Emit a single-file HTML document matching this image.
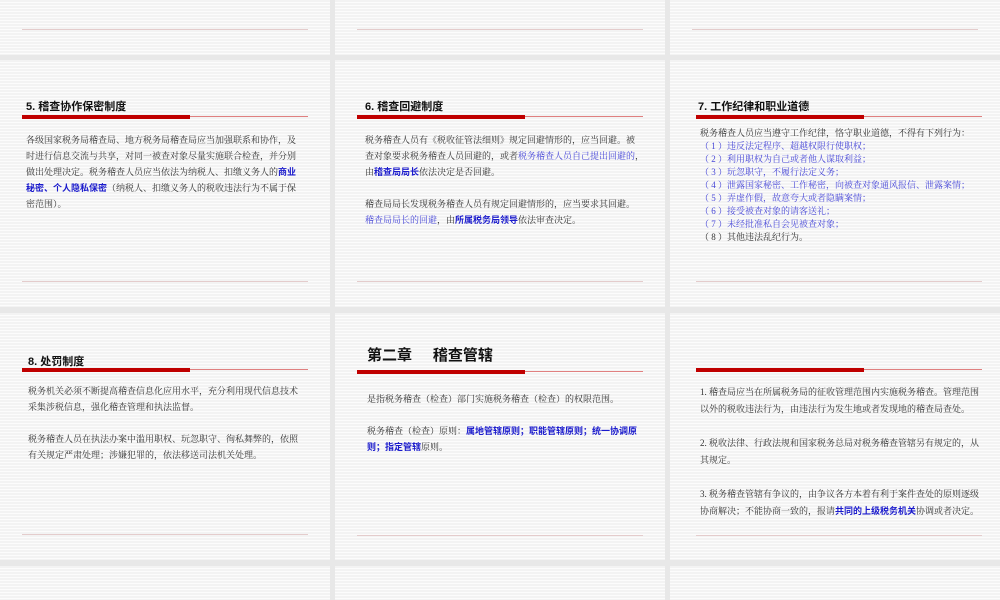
<!DOCTYPE html>
<html style="overflow:hidden;height:600px"><head><meta charset="utf-8"><style>
body{margin:0;width:1000px;height:600px;background:#e8e8e8;position:relative;overflow:hidden;font-family:"Liberation Serif","Noto Serif CJK SC",serif;}
.s{position:absolute;width:330px;height:247px;background:repeating-linear-gradient(#f3f3f3 0 2px,#fcfcfc 2px 3px);overflow:hidden}
.t{position:absolute;left:26px;top:38px;font-family:"Liberation Sans","Noto Sans CJK SC",sans-serif;font-weight:bold;font-size:11px;color:#111}
.bar{position:absolute;left:22px;top:55px;width:168px;height:4px;background:#c00000}
.thin{position:absolute;left:190px;top:56px;width:118px;height:1px;background:#e08080}
.bl{position:absolute;left:22px;top:221px;width:286px;height:1px;background:#e4cccc}
.x{position:absolute;left:26px;top:72px;font-size:9px;line-height:16px;color:#333;white-space:nowrap}
.b{color:#1a1acc;font-weight:bold;font-family:"Liberation Sans","Noto Sans CJK SC",sans-serif}
.l{color:#4848d8}
</style></head><body>
<div class="s" style="left:0;top:-192px"><div class="bl"></div></div>
<div class="s" style="left:335px;top:-192px"><div class="bl"></div></div>
<div class="s" style="left:670px;top:-192px"><div class="bl"></div></div>

<div class="s" style="left:0;top:60px">
<div class="t">5. 稽查协作保密制度</div><div class="bar"></div><div class="thin"></div>
<div class="x">各级国家税务局稽查局、地方税务局稽查局应当加强联系和协作，及<br>时进行信息交流与共享，对同一被查对象尽量实施联合检查，并分别<br>做出处理决定。税务稽查人员应当依法为纳税人、扣缴义务人的<span class="b">商业</span><br><span class="b">秘密、个人隐私保密</span>（纳税人、扣缴义务人的税收违法行为不属于保<br>密范围）。</div>
<div class="bl"></div></div>

<div class="s" style="left:335px;top:60px">
<div class="t" style="left:30px">6. 稽查回避制度</div><div class="bar"></div><div class="thin"></div>
<div class="x" style="left:30px">税务稽查人员有《税收征管法细则》规定回避情形的，应当回避。被<br>查对象要求税务稽查人员回避的，或者<span class="l">税务稽查人员自己提出回避的</span>，<br>由<span class="b">稽查局局长</span>依法决定是否回避。<br><br>稽查局局长发现税务稽查人员有规定回避情形的，应当要求其回避。<br><span class="l">稽查局局长的回避</span>，由<span class="b">所属税务局领导</span>依法审查决定。</div>
<div class="bl"></div></div>

<div class="s" style="left:670px;top:60px">
<div class="t" style="left:28px">7. 工作纪律和职业道德</div><div class="bar" style="left:26px"></div><div class="thin" style="left:194px"></div>
<div class="x" style="left:30px;top:67px;line-height:13px">税务稽查人员应当遵守工作纪律，恪守职业道德，不得有下列行为：<br><span class="l">（ 1 ）违反法定程序、超越权限行使职权；<br>（ 2 ）利用职权为自己或者他人谋取利益；<br>（ 3 ）玩忽职守，不履行法定义务；<br>（ 4 ）泄露国家秘密、工作秘密，向被查对象通风报信、泄露案情；<br>（ 5 ）弄虚作假，故意夸大或者隐瞒案情；<br>（ 6 ）接受被查对象的请客送礼；<br>（ 7 ）未经批准私自会见被查对象；</span><br>（ 8 ）其他违法乱纪行为。</div>
<div class="bl" style="left:26px"></div></div>

<div class="s" style="left:0;top:313px">
<div class="t" style="left:28px;top:40px">8. 处罚制度</div><div class="bar"></div><div class="thin"></div>
<div class="x" style="left:28px;top:70px">税务机关必须不断提高稽查信息化应用水平，充分利用现代信息技术<br>采集涉税信息，强化稽查管理和执法监督。<br><br>税务稽查人员在执法办案中滥用职权、玩忽职守、徇私舞弊的，依照<br>有关规定严肃处理；涉嫌犯罪的，依法移送司法机关处理。</div>
<div class="bl"></div></div>

<div class="s" style="left:335px;top:313px">
<div class="t" style="left:32px;top:31px;font-size:15px;font-family:'Liberation Sans','Noto Sans CJK SC',sans-serif">第二章&nbsp;&nbsp;&nbsp;&nbsp;&nbsp;稽查管辖</div><div class="bar" style="top:57px"></div><div class="thin" style="top:58px"></div>
<div class="x" style="left:32px;top:78px">是指税务稽查（检查）部门实施税务稽查（检查）的权限范围。<br><br>税务稽查（检查）原则：<span class="b">属地管辖原则；职能管辖原则；统一协调原</span><br><span class="b">则；指定管辖</span>原则。</div>
<div class="bl" style="top:222px"></div></div>

<div class="s" style="left:670px;top:313px">
<div class="bar" style="left:26px;top:55px"></div><div class="thin" style="left:194px"></div>
<div class="x" style="left:30px;top:71px;line-height:17px">1. 稽查局应当在所属税务局的征收管理范围内实施税务稽查。管理范围<br>以外的税收违法行为，由违法行为发生地或者发现地的稽查局查处。<br><br>2. 税收法律、行政法规和国家税务总局对税务稽查管辖另有规定的，从<br>其规定。<br><br>3. 税务稽查管辖有争议的，由争议各方本着有利于案件查处的原则逐级<br>协商解决；不能协商一致的，报请<span class="b">共同的上级税务机关</span>协调或者决定。</div>
<div class="bl" style="left:26px;top:222px"></div></div>

<div class="s" style="left:0;top:566px;height:34px"></div>
<div class="s" style="left:335px;top:566px;height:34px"></div>
<div class="s" style="left:670px;top:566px;height:34px"></div>
</body></html>
